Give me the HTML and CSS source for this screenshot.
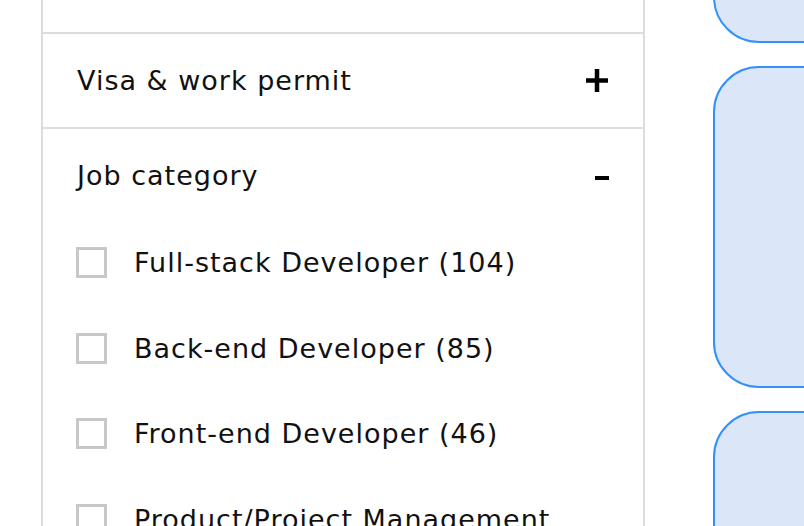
FILE: index.html
```html
<!DOCTYPE html>
<html lang="en">
<head>
    <meta charset="UTF-8">
    <meta name="viewport" content="width=device-width, initial-scale=1.0">
    <title>Jobs</title>
    <link rel="stylesheet" href="styles.css">
</head>
<body>
    <div class="page">
        <aside class="filters">
            <div class="filter-section filter-top"></div>

            <div class="filter-section">
                <div class="filter-head">
                    <span>Visa &amp; work permit</span>
                    <svg class="icon-plus" width="22" height="23" viewBox="0 0 22 23">
                        <path d="M0 11.5H22M11 0V23" stroke="#000" stroke-width="4.5"/>
                    </svg>
                </div>
            </div>

            <div class="filter-section">
                <div class="filter-head">
                    <span>Job category</span>
                    <svg class="icon-minus" width="14" height="4" viewBox="0 0 14 4">
                        <rect width="14" height="4" fill="#000"/>
                    </svg>
                </div>
                <ul class="filter-list">
                    <li><span class="check"></span>Full-stack Developer (104)</li>
                    <li><span class="check"></span>Back-end Developer (85)</li>
                    <li><span class="check"></span>Front-end Developer (46)</li>
                    <li><span class="check"></span>Product/Project Management</li>
                </ul>
            </div>
        </aside>

        <main class="results">
            <div class="job-card first"></div>
            <div class="job-card"></div>
            <div class="job-card"></div>
        </main>
    </div>
</body>
</html>
```

FILE: styles.css
```css
body {
    margin: 0;
    font-family: "DejaVu Sans", "Inter", sans-serif;
    color: #111;
    background: #fff;
    overflow: hidden;
    height: 526px;
}

.page {
    display: flex;
    align-items: flex-start;
    gap: 68px;
    padding-left: 41px;
    margin-top: -160px; /* list is scrolled down */
}

.filters {
    width: 604px;
    flex-shrink: 0;
    box-sizing: border-box;
    border: 2px solid #dcdcdc;
}

.filter-section {
    border-bottom: 2px solid #dcdcdc;
}

.filter-top {
    height: 190px;
}

.filter-head {
    height: 93px;
    display: flex;
    align-items: center;
    justify-content: space-between;
    padding: 0 35px 0 34px;
    font-size: 27px;
    letter-spacing: 1px;
}

.icon-minus {
    margin-top: 4px;
    margin-right: -1px;
}

.filter-list {
    list-style: none;
    margin: 0;
    padding: 25px 0 0 33px;
    display: flex;
    flex-direction: column;
    gap: 54.7px;
}

.filter-list li {
    display: flex;
    align-items: center;
    gap: 27px;
    height: 31px;
    font-size: 27px;
    letter-spacing: 1px;
    white-space: nowrap;
}

.check {
    width: 31px;
    height: 31px;
    box-sizing: border-box;
    border: 3px solid #c6c8ca;
    flex-shrink: 0;
}

.results {
    display: flex;
    flex-direction: column;
    gap: 23px;
    width: 400px;
    flex-shrink: 0;
}

.job-card {
    height: 322px;
    box-sizing: border-box;
    border: 2px solid #3391f7;
    border-radius: 46px;
    background: #dbe7f8;
}

.job-card.first {
    height: 203px;
}
```
